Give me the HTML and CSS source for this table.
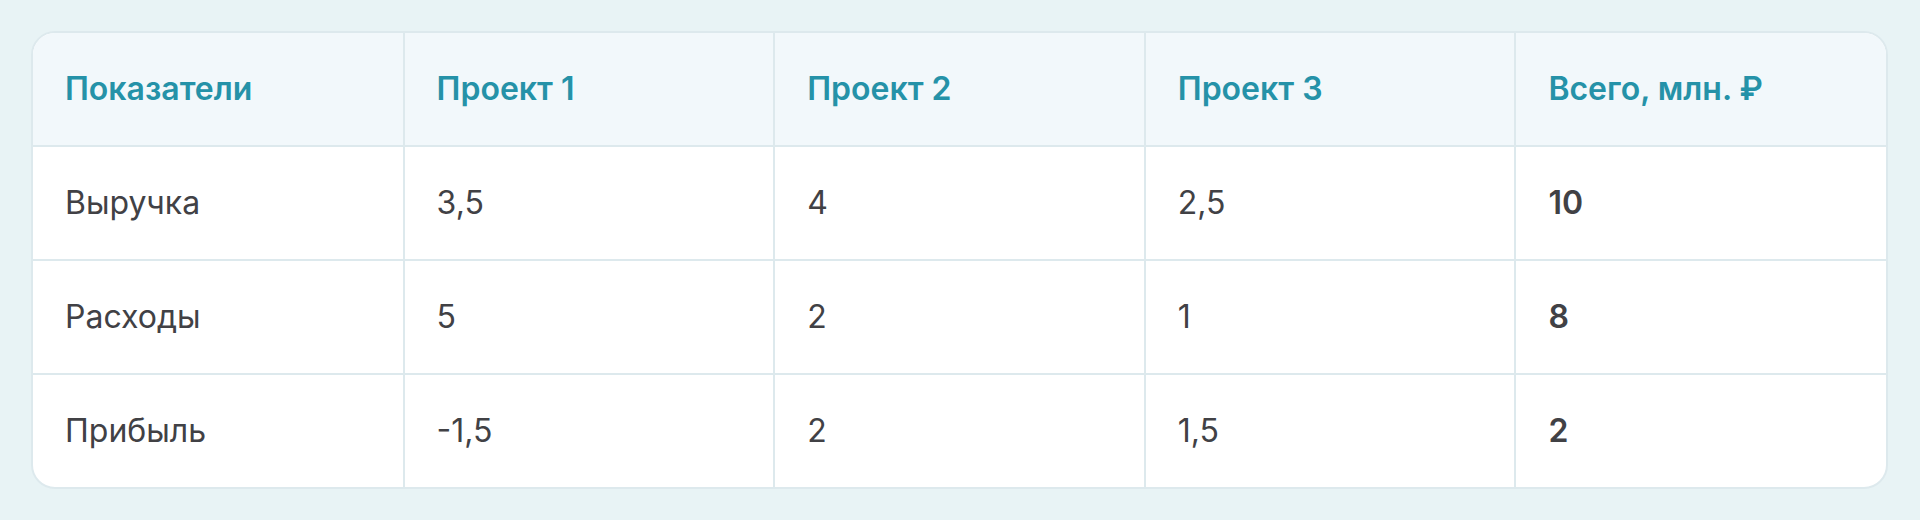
FILE: index.html
```html
<!DOCTYPE html>
<html lang="ru">
<head>
<meta charset="utf-8">
<link rel="stylesheet" href="styles.css">
</head>
<body>
<div class="card">
  <table class="data">
    <thead>
      <tr>
        <th>Показатели</th>
        <th>Проект 1</th>
        <th>Проект 2</th>
        <th>Проект 3</th>
        <th>Всего, млн. ₽</th>
      </tr>
    </thead>
    <tbody>
      <tr>
        <td>Выручка</td>
        <td>3,5</td>
        <td>4</td>
        <td>2,5</td>
        <td class="total">10</td>
      </tr>
      <tr>
        <td>Расходы</td>
        <td>5</td>
        <td>2</td>
        <td>1</td>
        <td class="total">8</td>
      </tr>
      <tr>
        <td>Прибыль</td>
        <td>-1,5</td>
        <td>2</td>
        <td>1,5</td>
        <td class="total">2</td>
      </tr>
    </tbody>
  </table>
</div>
</body>
</html>
```

FILE: styles.css
```css
html, body {
  margin: 0;
  padding: 0;
}
body {
  background: #e8f3f5;
  padding: 31px 32px 32px 31px;
  font-family: Inter, "Noto Sans", sans-serif;
  box-sizing: border-box;
  height: 520px;
}
.card {
  background: #ffffff;
  border: 2px solid #dde9ed;
  border-radius: 24px;
  overflow: hidden;
}
.data {
  width: 100%;
  border-collapse: collapse;
  table-layout: fixed;
}
.data th,
.data td {
  padding: 32px 32px;
  line-height: 48px;
  font-size: 32px;
  text-align: left;
  border-right: 2px solid #dde9ed;
  border-bottom: 2px solid #dde9ed;
}
.data th:last-child,
.data td:last-child {
  border-right: none;
}
.data tbody tr:last-child td {
  border-bottom: none;
}
.data th {
  background: #f2f8fb;
  color: #2592a8;
  font-weight: 600;
}
.data td {
  color: #414145;
  font-weight: 400;
}
.data td.total {
  font-weight: 600;
}
```
